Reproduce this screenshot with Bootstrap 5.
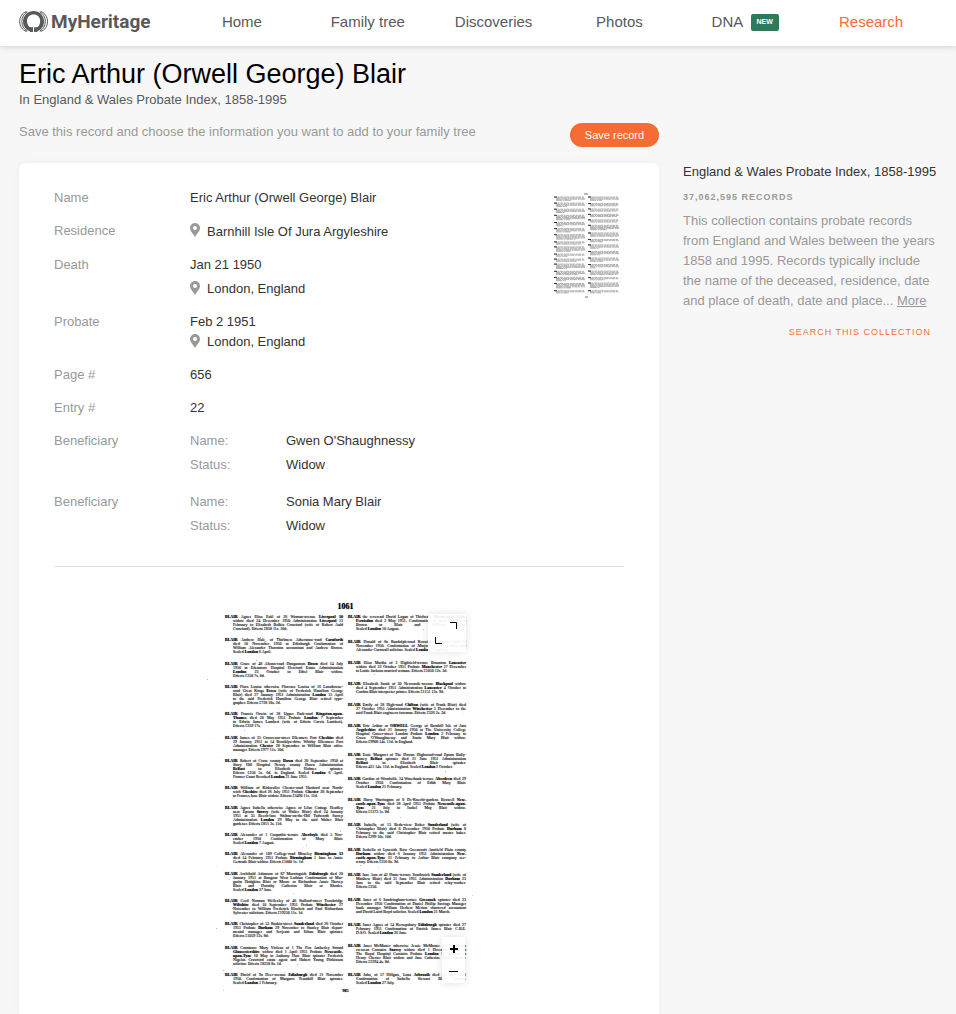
<!DOCTYPE html>
<html lang="en">
<head>
<meta charset="utf-8">
<meta name="viewport" content="width=device-width, initial-scale=1">
<title>Eric Arthur (Orwell George) Blair - MyHeritage</title>
<link href="https://cdn.jsdelivr.net/npm/bootstrap@5.3.0/dist/css/bootstrap.min.css" rel="stylesheet">
<style>
body{font-family:"Liberation Sans",Arial,sans-serif;font-size:13px;line-height:20px;background:#f7f7f7;color:#333}
.topbar{height:46px;background:#fff;box-shadow:0 1px 6px rgba(0,0,0,.16);padding:0 22px 3px 19px}
.brand{width:160px;gap:2px;color:#58595b;font:700 19px/24px Roboto,sans-serif}
.topbar .nav-link{color:#58595b;font-size:15px;padding:0;flex:1 1 0;text-align:center;white-space:nowrap}
.topbar .nav-link.active{color:#f76b34}
.new-tag{background:#2c7a5b;font-size:7px;line-height:9px;padding:3px 6px 5px;border-radius:2px;vertical-align:3px}
.page{padding:12px 19px 0 19px}
h1{font-size:27px;line-height:32px;color:#000;margin:0}
.subtitle{color:#58595b;line-height:20px}
.muted{color:#999}
.btn-save{background:#f76b34;color:#fff;font-size:11px;line-height:24px;padding:0;width:89px;border-radius:12px;margin-top:1px}
.btn-save:hover{background:#e55b25;color:#fff}
.record{background:#fff;border-radius:6px 6px 0 0;box-shadow:0 0 6px rgba(0,0,0,.05);padding:25px 35px 0}
.fields{gap:13px;margin:0}
.fields dt{width:136px;font-weight:400;color:#999}
.fields dd{margin:0}
.fields dd.sub-label{width:96px;color:#999}
.place{line-height:20px;gap:7px}
.place svg{margin-bottom:3px}
.fields dd.place{line-height:21px}
.gap-line{gap:4px}
.scan-thumb{width:68px}
.rule{border-top:1px solid #e1e1e1;margin-top:30px}
.side{width:254px;padding-top:104px}
.side h2{font-size:13px;line-height:20px;margin:0 0 7px}
.count{font-size:9px;letter-spacing:1px;line-height:16px;font-weight:700;margin-bottom:6px}
.collection{color:#f76b34;font-size:9px;letter-spacing:1px;line-height:16px}
.more-row{padding:10px 6px 0 0}
.scan{width:282px;padding:35px 14px 18px 27px;font:4px/4px "Liberation Serif",serif;color:#000;text-shadow:0 0 1px rgba(0,0,0,.7)}
.scan-head{font-size:8px;line-height:9px}
.scan-col{width:118px;height:370px}
.scan-col p{margin:0 0 0 8px}
.scan-col span{display:block;white-space:nowrap;text-align:justify;text-align-last:justify}
.scan-col span:first-child{margin-left:-8px}
.scan-col span:last-child{text-align-last:left}
.dots{inset:0}
.tool{background:rgba(255,255,255,.92);border:0;padding:0;color:#000;display:flex;align-items:center;justify-content:center}
.expand{top:47px;right:14px;width:38px;height:38px;box-shadow:0 0 8px rgba(0,0,0,.12)}
.zoomer{bottom:28px;right:15px;width:23px;height:46px;box-shadow:0 0 8px rgba(0,0,0,.12)}
.zoomer .tool{height:23px}
</style>
</head>
<body class="d-flex flex-column min-vh-100">
<header class="topbar d-flex align-items-center position-relative">
  <a href="#" class="brand d-flex align-items-center text-decoration-none flex-shrink-0" aria-label="MyHeritage">
    <svg width="30" height="24" viewBox="0 0 30 24" fill="none" stroke="#58595b" class="flex-shrink-0" aria-hidden="true">
      <circle cx="14.600" cy="11.500" r="10.600" fill="#58595b" stroke="none"/>
      <path d="M14 23.500V18H12.600C9.600 17 8 14.400 8 11 8 7.200 10.800 4.600 14.600 4.600S21.200 7.200 21.200 11C21.200 14.400 19.600 17 16.600 18H15.200V23.500Z" fill="#fff" stroke="none"/>
      <path d="M9.800 17.200H14v4.800h-3ZM19.400 17.200h-4.200v4.800h3Z" fill="#58595b" stroke="none"/>
      <path d="M7.600 1.500C3 3 .7 7 .7 11.500S3 20 7.600 21.500M21.600 1.500C26.200 3 28.500 7 28.500 11.500S26.200 20 21.600 21.500M8.500 2C4.800 3.600 2.900 7.200 2.900 11.500S4.800 19.400 8.500 21M20.700 2C24.400 3.600 26.300 7.200 26.300 11.500S24.400 19.400 20.700 21"/>
    </svg><span>MyHeritage</span>
  </a>
  <nav class="nav flex-nowrap flex-fill">
    <a class="nav-link" href="#">Home</a>
    <a class="nav-link" href="#">Family tree</a>
    <a class="nav-link" href="#">Discoveries</a>
    <a class="nav-link" href="#">Photos</a>
    <a class="nav-link" href="#">DNA <span class="badge new-tag ms-1">NEW</span></a>
    <a class="nav-link active" href="#">Research</a>
  </nav>
</header>

<main class="page d-flex flex-fill gap-4">
  <div class="d-flex flex-column flex-fill">
    <h1>Eric Arthur (Orwell George) Blair</h1>
    <div class="subtitle mb-2">In England &amp; Wales Probate Index, 1858-1995</div>
    <div class="d-flex justify-content-between align-items-start mb-3 pt-1">
      <div class="muted">Save this record and choose the information you want to add to your family tree</div>
      <button type="button" class="btn btn-save border-0">Save record</button>
    </div>
    <section class="record flex-fill">
      <div class="d-flex justify-content-between">
        <dl class="fields d-flex flex-column">
          <div class="d-flex"><dt>Name</dt><dd>Eric Arthur (Orwell George) Blair</dd></div>
          <div class="d-flex"><dt>Residence</dt><dd class="place d-flex align-items-center"><svg width="10" height="14" viewBox="0 0 10 14"><path fill="#999" fill-rule="evenodd" d="M5 0a5 5 0 0 1 5 5c0 3-3 5.500-5 9C3 10.500 0 8 0 5a5 5 0 0 1 5-5Zm0 3a2 2 0 1 0 0 4 2 2 0 0 0 0-4Z"/></svg>Barnhill Isle Of Jura Argyleshire</dd></div>
          <div class="d-flex"><dt>Death</dt><dd class="d-flex flex-column gap-line"><span>Jan 21 1950</span><span class="place d-flex align-items-center"><svg width="10" height="14" viewBox="0 0 10 14"><path fill="#999" fill-rule="evenodd" d="M5 0a5 5 0 0 1 5 5c0 3-3 5.500-5 9C3 10.500 0 8 0 5a5 5 0 0 1 5-5Zm0 3a2 2 0 1 0 0 4 2 2 0 0 0 0-4Z"/></svg>London, England</span></dd></div>
          <div class="d-flex"><dt>Probate</dt><dd><span class="d-block">Feb 2 1951</span><span class="place d-flex align-items-center"><svg width="10" height="14" viewBox="0 0 10 14"><path fill="#999" fill-rule="evenodd" d="M5 0a5 5 0 0 1 5 5c0 3-3 5.500-5 9C3 10.500 0 8 0 5a5 5 0 0 1 5-5Zm0 3a2 2 0 1 0 0 4 2 2 0 0 0 0-4Z"/></svg>London, England</span></dd></div>
          <div class="d-flex"><dt>Page #</dt><dd>656</dd></div>
          <div class="d-flex"><dt>Entry #</dt><dd>22</dd></div>
          <div class="d-flex mb-1"><dt>Beneficiary</dt><dd class="sub-label d-flex flex-column gap-line"><span>Name:</span><span>Status:</span></dd><dd class="d-flex flex-column gap-line"><span>Gwen O'Shaughnessy</span><span>Widow</span></dd></div>
          <div class="d-flex"><dt>Beneficiary</dt><dd class="sub-label d-flex flex-column gap-line"><span>Name:</span><span>Status:</span></dd><dd class="d-flex flex-column gap-line"><span>Sonia Mary Blair</span><span>Widow</span></dd></div>
        </dl>
        <a href="#" class="scan-thumb mt-1 me-1" aria-label="View record image"><svg id="thumb" width="68" height="108" viewBox="0 0 68 108"></svg></a>
      </div>
      <div class="rule"></div>
      <figure class="scan position-relative mx-auto mb-0">
        <svg id="dots" class="dots position-absolute w-100 h-100" aria-hidden="true"></svg>
        <div class="scan-head text-center fw-bold mb-1">1061</div>
        <div class="d-flex justify-content-between">
          <div id="colA" class="scan-col d-flex flex-column justify-content-between"></div>
          <div id="colB" class="scan-col d-flex flex-column justify-content-between"></div>
        </div>
        <div class="text-center fw-bold pt-1">985</div>
        <button type="button" class="tool expand position-absolute" aria-label="Full screen"><svg width="24" height="24" viewBox="0 0 24 24" fill="none" stroke="#000"><path d="M15 1.500h6.500V8M.5 16v6.500H7"/></svg></button>
        <div class="zoomer position-absolute">
          <button type="button" class="tool w-100" aria-label="Zoom in"><svg width="8" height="8" viewBox="0 0 8 8" stroke="#000" stroke-width="2"><path d="M0 4h8M4 0v8"/></svg></button>
          <button type="button" class="tool w-100" aria-label="Zoom out"><svg width="9" height="9" viewBox="0 0 9 9" stroke="#000"><path d="M0 4.500h9"/></svg></button>
        </div>
      </figure>
    </section>
  </div>
  <aside class="side flex-shrink-0">
    <h2>England &amp; Wales Probate Index, 1858-1995</h2>
    <div class="count muted">37,062,595 RECORDS</div>
    <p class="muted mb-0">This collection contains probate records from England and Wales between the years 1858 and 1995. Records typically include the name of the deceased, residence, date and place of death, date and place... <a href="#" class="muted">More</a></p>
    <div class="more-row text-end"><a href="#" class="collection text-decoration-none">SEARCH THIS COLLECTION</a></div>
  </aside>
</main>

<script>
// Index entries: "|" separates the printed lines, "*" encloses bold words.
const left = [
"Agnes Eliza Eakl of 26 Woman-avenue *Liverpool 10*|widow died 24 December 1950 Administration *Liverpool* 13|February to Elizabeth Bolkia Crawford (wife of Robert Auld|Crawford). Effects £858 11s. 10d.",
"Andrew Hale, of Thirlmere Atherstone-road *Carnforth*|died 10 November 1950 at Edinburgh Confirmation of|William Alexander Thornton accountant and Andrew Brown.|Sealed *London* 6 April.",
"Grace of 48 Altona-road Dungannon *Down* died 14 July|1950 at Edenmore Hospital Hereford Estate Administration|*London* 23 October to Ethel Blair widow.|Effects £358 7s. 8d.",
"Flora Louisa otherwise Florence Louisa of 16 Lansdowne-|road Great Kings *Essex* (wife of Frederick Hamilton George|Blair) died 27 January 1951 Administration *London* 15 April|to the said Frederick Hamilton George Blair retired typo-|grapher. Effects £728 18s. 2d.",
"Francis Orwin of 38 Upper Park-road *Kingston-upon-*|*Thames* died 20 May 1951 Probate *London* 7 September|to Edwin James Lambert (wife of Edwin Carvis Lambert).|Effects £359 17s.",
"James of 35 Grosvenor-street Ellesmere Port *Cheshire* died|29 January 1951 at 14 Brooklyn-drive Whitby Ellesmere Port|Administration *Chester* 28 September to William Blair office|manager. Effects £977 11s. 10d.",
"Robert of Cross county *Down* died 20 September 1950 at|Story Hill Hospital Newry county Down Administration|*Belfast* to Elizabeth Holmes spinster.|Effects £250 5s. 6d. in England. Sealed *London* 6 April.|Former Grant Revoked *London* 21 June 1951.",
"William of Kirkwallet Chester-road Hartford near North-|wich *Cheshire* died 26 July 1951 Probate *Chester* 28 September|to Frances Jane Blair widow. Effects £3490 11s. 11d.",
"Agnes Isabella otherwise Agnes of Lilac Cottage Headley|near Epsom *Surrey* (wife of Walter Blair) died 24 January|1951 at 35 Beech-lane Walton-on-the-Hill Tadworth Surrey|Administration *London* 29 May to the said Walter Blair|gardener. Effects £811 3s. 11d.",
"Alexander of 1 Coopathie-terrace *Aberfoyle* died 5 Nov-|ember 1950 Confirmation of Mary Blair.|Sealed *London* 7 August.",
"Alexander of 109 College-road Moseley *Birmingham 13*|died 14 February 1951 Probate *Birmingham* 1 June to Annie|Gertrude Blair widow. Effects £1000 1s. 1d.",
"Archibald Adamson of 87 Morningside *Edinburgh* died 20|January 1951 at Bangour West Lothian Confirmation of Mar-|garita Hodgkins Blair or Moore or Richardson Annie Harvey|Blair and Dorothy Catherine Blair or Rhodes.|Sealed *London* 27 June.",
"Cecil Norman Wellesley of 46 Stallard-street Trowbridge|*Wiltshire* died 10 September 1951 Probate *Winchester* 27|November to William Frederick Blackett and Paul Richardson|Sylvester solicitors. Effects £19250 11s. 1d.",
"Christopher of 53 Ruskin-street *Sunderland* died 26 October|1951 Probate *Durham* 29 November to Stanley Blair depart-|mental manager and Serjeant and Ethan Blair spinster.|Effects £1059 12s. 8d.",
"Constance Mary Violena of 1 The Firs Amberley Stroud|*Gloucestershire* widow died 1 April 1951 Probate *Newcastle-*|*upon-Tyne* 10 May to Anthony Hare Blair spinster Frederick|Nigelus Crawford estate agent and Hubert Young Dickinson|solicitor. Effects £8258 8s. 1d.",
"David of 9a Deer-avenue *Edinburgh* died 21 November|1950. Confirmation of Margaret Tearnhill Blair spinster.|Sealed *London* 1 February."
];
const right = [
"the reverend David Logan of Thirlwall *Albany-road Stoke*|*Ferrisdon* died 2 May 1951. Confirmation of Janet Henderson|Brown or Blair and William Blair.|Sealed *London* 10 August.",
"Donald of 8a Randolph-road Renwick *Glasgow* died 12|November 1950. Confirmation of Marjorie Blair spinster and|Alexander Cornwall solicitor. Sealed *London* 2 February.",
"Eliza Martha of 2 Highfield-terrace Braunton *Lancaster*|widow died 22 October 1951 Probate *Manchester* 27 December|to Lottie Jackson married woman. Effects £1050 12s. 3d.",
"Elizabeth Sarah of 30 Newcastle-avenue *Blackpool* widow|died 4 September 1951 Administration *Lancaster* 4 October to|Gordon Blair interpreter printer. Effects £1151 13s. 9d.",
"Emily of 28 High-road *Chilton* (wife of Frank Blair) died|27 October 1951 Administration *Winchester* 3 December to the|said Frank Blair engineers foreman. Effects £326 2s. 2d.",
"Eric Arthur or *ORWELL* George of Barnhill Isle of Jura|*Argyleshire* died 21 January 1950 at The University College|Hospital Gower-street London Probate *London* 2 February to|Gwen O'Shaughnessy and Sonia Mary Blair widow.|Effects £9908 14s. 11d. in England.",
"Essie Margaret of The Downs Highwood-road Epson Bally-|money *Belfast* spinster died 21 June 1951 Administration|*Belfast* to Elizabeth Blair spinster.|Effects 421 14s. 11d. in England. Sealed *London* 2 October.",
"Gordon of Woodville 24 Waterbank-terrace *Aberdeen* died 29|October 1950 Confirmation of Edith Mary Blair.|Sealed *London* 21 February.",
"Harry Warrington of 8 De-Knecht-gardens Benwell *New-*|*castle-upon-Tyne* died 28 April 1951 Probate *Newcastle-upon-*|*Tyne* 21 July to Isobel May Blair widow.|Effects £1373 1s. 8d.",
"Isabella, of 13 Beda-view Roker *Sunderland* (wife of|Christopher Blair) died 8 December 1950 Probate *Durham* 8|February to the said Christopher Blair retired master baker.|Effects £299 10s. 10d.",
"Isobella of Lyneside Row Greencroft Annfield Plain county|*Durham* widow died 6 January 1951 Administration *New-*|*castle-upon-Tyne* 21 February to Arthur Blair company sec-|retary. Effects £256 8s. 9d.",
"Jane Ann of 42 Dame-terrace Southwick *Sunderland* (wife of|Matthew Blair) died 31 June 1951 Administration *Durham* 23|June to the said September Blair retired relay-worker.|Effects £250.",
"Janet of 6 Sandringham-terrace *Greenock* spinster died 23|December 1950 Confirmation of Daniel Phillip Savings Manager|bank manager William Herbert Merton chartered accountant|and David Laird Boyd solicitor. Sealed *London* 21 March.",
"Janet Agnes of 14 Kersepsbury *Edinburgh* spinster died 27|February 1951 Confirmation of Patrick James Blair C.B.E.|D.S.O. Sealed *London* 26 June.",
"Janet McMaster otherwise Jessie McMaster of 11 Station|crescent Carstairs *Surrey* widow died 1 December 1950 at|The Royal Hospital Carstairs Probate *London* 12 January to|Henry Chester Blair widow and Jane Catherine Blair spinster.|Effects £2394 4s. 8d.",
"John, of 57 Hillgate, Lona *Arbroath* died 24 May 1951|Confirmation of Isabella Stewart Blair widow.|Sealed *London* 27 July."
];
const fill = (id, list) => document.getElementById(id).innerHTML = list.map(e =>
  "<p>" + ("*BLAIR* " + e).replace(/\*([^*]+)\*/g, "<b>$1</b>").split("|").map(l => "<span>" + l + "</span>").join("") + "</p>").join("");
fill("colA", left);
fill("colB", right);

// Thumbnail: each printed line becomes a thin grey stroke.
let out = '<path d="M32 2h4M33 105h3" stroke="#777" fill="none"/>';
[[left, 2], [right, 36]].forEach(([list, x]) => {
  const lines = list.reduce((n, e) => n + e.split("|").length, 0);
  const gap = (97 - lines * 1.1) / (list.length - 1);
  let y = 5;
  list.forEach(e => {
    e.split("|").forEach((l, i, all) => {
      const w = i === all.length - 1 ? Math.min(29, l.length * .5) : 30;
      out += `<path d="M${i ? x + 2 : x} ${y}H${x + w + (i ? 1 : 0)}" stroke="#333" stroke-opacity=".55" stroke-width=".7" stroke-dasharray="${3 + i} .6 2 .5"/>`;
      if (!i) out += `<path d="M${x} ${y}h3" stroke="#222" stroke-width=".9"/>`;
      y += 1.1;
    });
    y += gap;
  });
});
document.getElementById("thumb").innerHTML = out;

// Dust specks of the scanned page.
let seed = 7, specks = "";
const rnd = n => (seed = (seed * 16807) % 2147483647) % n;
for (let i = 0; i < 70; i++) specks += `<rect x="${rnd(282)}" y="${32 + rnd(395)}" width="1" height="1" fill="#000" opacity=".${1 + rnd(3)}"/>`;
document.getElementById("dots").innerHTML = specks;
</script>
<script src="https://cdn.jsdelivr.net/npm/bootstrap@5.3.0/dist/js/bootstrap.bundle.min.js"></script>
</body>
</html>
